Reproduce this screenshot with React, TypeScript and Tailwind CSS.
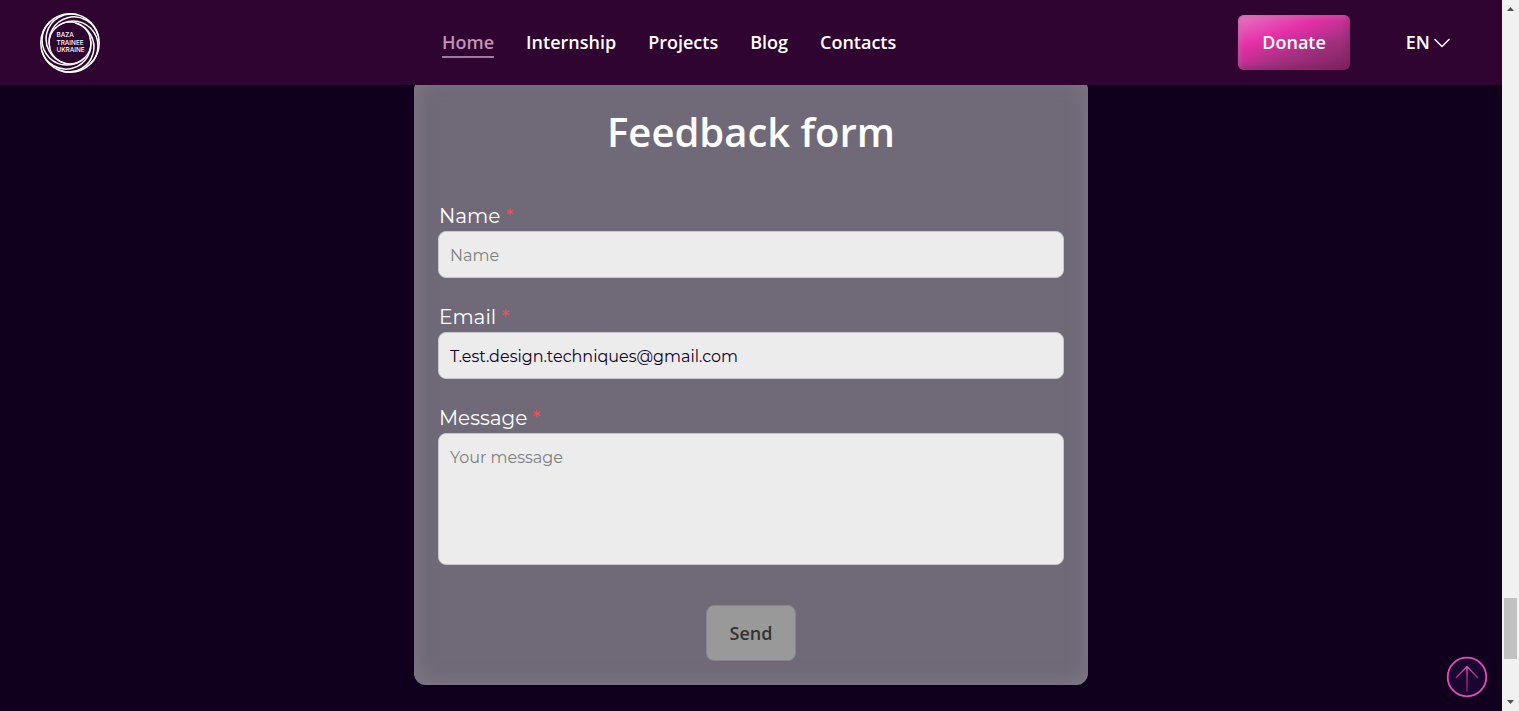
import { useState } from "react";

const links = ["Internship", "Projects", "Blog", "Contacts"];
const swirlAngles = [15, 75, 135, 195, 255, 315];

const fieldClass =
  "block w-full rounded-lg border border-[#c9c6cc] bg-[#ececec] px-[11px] text-base text-[#10001e] outline-none placeholder:text-[#808080]";

function Logo() {
  return (
    <svg viewBox="0 0 60 60" className="size-[60px]" role="img" aria-label="Baza Trainee Ukraine">
      <g fill="none" stroke="#fff" strokeWidth="1.5">
        <circle cx="30" cy="30" r="29.2" />
        <circle cx="30" cy="30" r="20.8" strokeWidth="1.2" />
        {swirlAngles.map((angle) => (
          <path key={angle} d="M30 9.200A25 25 0 0 1 30 59.200" transform={`rotate(${angle} 30 30)`} />
        ))}
      </g>
      <g fill="#fff" fontFamily="Inter, sans-serif" fontSize="6.4" fontWeight="500">
        <text x="16.500" y="24">BAZA</text>
        <text x="16.500" y="31.700">TRAINEE</text>
        <text x="16.500" y="39.200">UKRAINE</text>
      </g>
    </svg>
  );
}

function Header() {
  return (
    <header className="relative z-10 flex h-[85px] items-center justify-between bg-[#2f0431] pr-[52px] pl-10 text-lg leading-[27px] font-semibold text-white">
      <a href="#home">
        <Logo />
      </a>
      <nav className="flex gap-8 pt-0.5">
        <a href="#home" className="border-b-2 border-[#9d7b9f] text-[#c193b5]">
          Home
        </a>
        {links.map((label) => (
          <a key={label} href={`#${label.toLowerCase()}`}>
            {label}
          </a>
        ))}
      </nav>
      <div className="flex items-center gap-14">
        <button
          type="button"
          className="rounded-md bg-[linear-gradient(160deg,#e878c4_0%,#e62fa8_35%,#a0307e_65%,#7d1f5c_100%)] px-6 py-[14px] shadow-[inset_0_0_6px_rgba(110,10,80,0.5),inset_2px_2px_5px_rgba(255,255,255,0.25)]"
        >
          Donate
        </button>
        <button type="button" className="flex items-center gap-1">
          EN
          <svg viewBox="0 0 16 16" className="size-4" fill="none" stroke="#fff" strokeWidth="1.5" aria-hidden="true">
            <path d="M1 4.5l7 7 7-7" strokeLinecap="round" strokeLinejoin="round" />
          </svg>
        </button>
      </div>
    </header>
  );
}

function Label({ id, text }: { id: string; text: string }) {
  return (
    <label htmlFor={id} className="mb-[3px] block pl-px text-xl leading-6 text-white">
      {text} <span className="text-[#f0505a]">*</span>
    </label>
  );
}

function FeedbackForm() {
  const [email, setEmail] = useState("T.est.design.techniques@gmail.com");
  return (
    <form className="mx-auto -mt-[7px] w-full max-w-[674px] rounded-xl bg-[#706a78] p-6 shadow-[inset_0_0_20px_rgba(140,130,140,0.7)]">
      <h1 className="text-center text-[40px] leading-[60px] font-semibold text-white">Feedback form</h1>
      <div className="mt-[42px] flex flex-col gap-[27px] font-['Montserrat',sans-serif]">
        <div>
          <Label id="name" text="Name" />
          <input id="name" type="text" placeholder="Name" className={`${fieldClass} h-[47px] pt-0.5`} />
        </div>
        <div>
          <Label id="email" text="Email" />
          <input
            id="email"
            type="email"
            value={email}
            onChange={(e) => setEmail(e.target.value)}
            className={`${fieldClass} h-[47px] pt-0.5`}
          />
        </div>
        <div>
          <Label id="message" text="Message" />
          <textarea id="message" placeholder="Your message" className={`${fieldClass} h-[132px] resize-none py-3`} />
        </div>
      </div>
      <button
        type="submit"
        disabled
        className="mx-auto mt-10 block rounded-lg border border-[#888390] bg-[#999] px-[23px] py-[13px] text-lg leading-[28px] font-semibold text-[#333]"
      >
        Send
      </button>
    </form>
  );
}

function ScrollTrack() {
  return (
    <div className="flex w-[17px] shrink-0 flex-col items-center bg-[#f1f1f1]" aria-hidden="true">
      <svg viewBox="0 0 17 17" className="size-[17px]">
        <path d="M5 11l3.5-4 3.5 4z" fill="#505050" />
      </svg>
      <div className="grow-[581]" />
      <div className="h-[61px] w-[13px] bg-[#c1c1c1]" />
      <div className="grow-[35]" />
      <svg viewBox="0 0 17 17" className="size-[17px]">
        <path d="M5 6l3.5 4 3.5-4z" fill="#505050" />
      </svg>
    </div>
  );
}

export default function App() {
  return (
    <div className="flex min-h-screen bg-[#10001e] font-['Open_Sans',sans-serif]">
      <div className="relative min-w-0 grow">
        <Header />
        <main>
          <FeedbackForm />
        </main>
        <a href="#home" aria-label="Back to top" className="absolute right-[14px] bottom-[13px]">
          <svg viewBox="0 0 42 42" className="size-[42px]" fill="none">
            <defs>
              <linearGradient id="arrow" x1="0" y1="10" x2="0" y2="36" gradientUnits="userSpaceOnUse">
                <stop offset="0" stopColor="#d55fb0" />
                <stop offset="0.4" stopColor="#a5288a" />
                <stop offset="1" stopColor="#6c1a5c" />
              </linearGradient>
            </defs>
            <circle cx="21" cy="21" r="19.3" fill="#1a0430" stroke="#e050b4" strokeWidth="1.8" />
            <path d="M20.200 10.5h1.600V35.500h-1.600z" fill="url(#arrow)" />
            <path d="M10 22L21 10.500 32 22" stroke="url(#arrow)" strokeWidth="1.400" />
          </svg>
        </a>
      </div>
      <ScrollTrack />
    </div>
  );
}
